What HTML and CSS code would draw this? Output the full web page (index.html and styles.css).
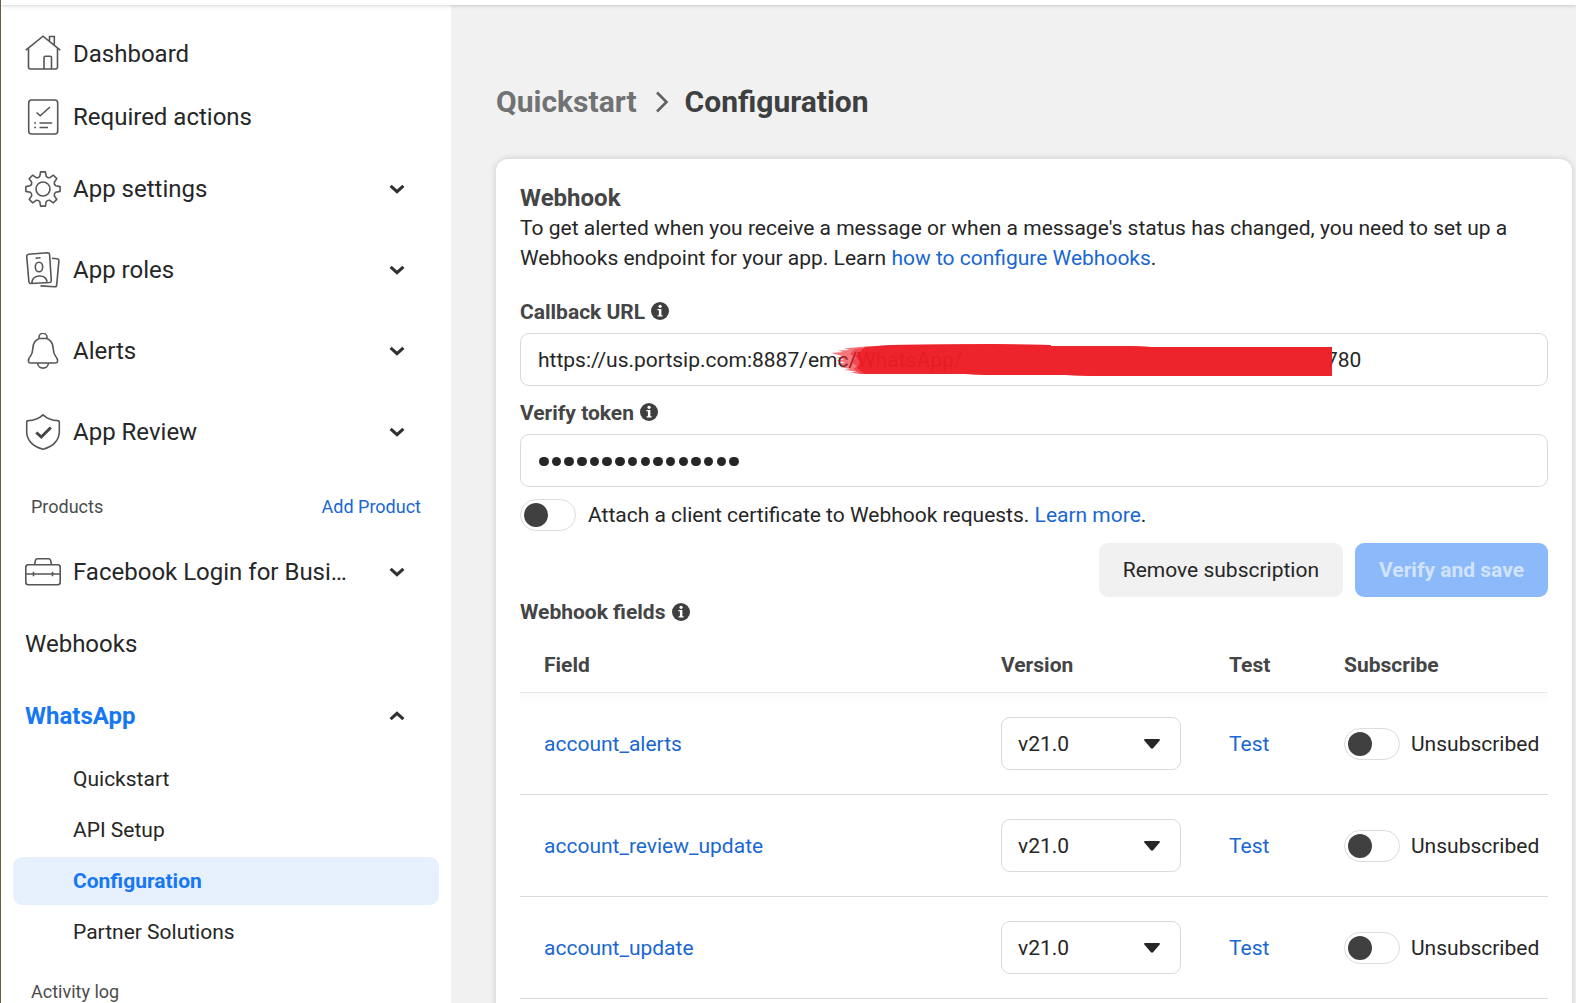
FILE: index.html
```html
<!DOCTYPE html>
<html lang="en">
<head>
<meta charset="utf-8">
<title>Configuration</title>
<link rel="stylesheet" href="styles.css">
</head>
<body>
<svg class="defs" width="0" height="0">
  <symbol id="down" viewBox="0 0 16 10"><path d="M1.6 1.8 8 7.6l6.4-5.8" fill="none" stroke="#303133" stroke-width="3.1"/></symbol>
  <symbol id="info" viewBox="0 0 18 18"><circle cx="9" cy="9" r="9" fill="#3f3f40"/><circle cx="9.1" cy="4.3" r="1.6" fill="#fff"/><path d="M6.4 7h4v6.2h1.2v1.3H6.6v-1.3h1.3V8.3H6.4z" fill="#fff"/></symbol>
  <symbol id="caret" viewBox="0 0 16 10"><path d="M1.200 0h13.600c1 0 1.400 1 .7 1.700L9.300 9c-.8.9-1.800.9-2.600 0L.5 1.700C-.2 1 .2 0 1.200 0z" fill="#262626"/></symbol>
</svg>
<div class="topbar"></div>
<div class="page">
<nav class="sidebar">
  <a class="item dashboard"><svg class="icon" viewBox="0 0 36 36"><path d="M.8 15.200 18 1.200l17.200 14M3.500 13v19a2 2 0 0 0 2 2h25a2 2 0 0 0 2-2V13M24.500 6.300V1.500h4.800v8.700M19 33.500V22.700a1.500 1.500 0 0 1 1.500-1.500h4.500a1.500 1.500 0 0 1 1.500 1.500v10.800"/></svg><span>Dashboard</span></a>
  <a class="item required"><svg class="icon" viewBox="0 0 36 36"><rect x="3.700" y="1" width="29" height="34" rx="3"/><path d="M11.500 13.500l3.700 3.300L25 8M14.500 24h12.700M14.500 28.500h8.500M9.200 24h1.800M9.200 28.500h1.800"/></svg><span>Required actions</span></a>
  <a class="item group"><svg class="icon" viewBox="0 0 36 36"><circle cx="18" cy="18" r="7"/><path stroke-linejoin="round" d="M15.600.9H20.400L21.200 5.200Q22.500 7.100 24.800 6.700L28.400 4.200 31.800 7.600 29.300 11.200Q28.900 13.500 30.800 14.800L35.100 15.600V20.400L30.800 21.200Q28.900 22.500 29.300 24.800L31.800 28.400 28.400 31.800 24.800 29.300Q22.500 28.900 21.200 30.800L20.400 35.100H15.600L14.800 30.800Q13.500 28.900 11.200 29.300L7.600 31.800 4.200 28.400 6.700 24.800Q7.100 22.500 5.200 21.200L.9 20.400V15.600L5.200 14.800Q7.100 13.500 6.700 11.200L4.200 7.600 7.600 4.200 11.200 6.700Q13.500 7.100 14.800 5.200Z"/></svg><span>App settings</span><svg class="chev"><use href="#down"/></svg></a>
  <a class="item group wide"><svg class="icon" viewBox="0 0 36 36"><path d="M3.600 2.200 22.500.8q1.900 0 2.100 1.700l1.700 26q0 1.700-1.700 2L5.900 31.500q-1.700 0-2-1.700L1.700 4.300q0-1.700 1.900-2.100zM6.800 31q.5-6.500 7-7 7-.6 8.300 5.800M10.500 6.200l5-.4"/><ellipse cx="14" cy="15" rx="3.700" ry="4.800"/><path d="M27 6.300l5 .5q2.100.2 1.900 2.100l-2.200 24q-.2 2-2.200 1.900l-14-.9"/></svg><span>App roles</span><svg class="chev"><use href="#down"/></svg></a>
  <a class="item group wide"><svg class="icon" viewBox="0 0 36 36"><path d="M14 5.500V4.300a4 4 0 0 1 8 0v1.200zM14 5.500C9.500 7.500 8 11.500 7.800 15.500 7.600 22 5.500 22.500 4 25.500c-1 1.800-.9 4.500 1.400 4.500h25.200c2.300 0 2.400-2.700 1.400-4.500-1.500-3-3.600-3.500-3.800-10C28 11.500 26.500 7.500 22 5.500M12.500 30c.5 6.800 10.500 6.800 11 0"/></svg><span>Alerts</span><svg class="chev"><use href="#down"/></svg></a>
  <a class="item group wide"><svg class="icon" viewBox="0 0 36 36"><path d="M18 .8c4 3.700 9 5.600 14.800 5.800 1.200 0 1.500.5 1.500 1.500v9.700C34.300 27 27 33 18 35.200 9 33 1.700 27 1.700 17.800V8.100c0-1 .3-1.500 1.500-1.500C9 6.400 14 4.500 18 .8z"/><path class="bold" d="M11.300 18.500l5 4.500 9.500-9.500"/></svg><span>App Review</span><svg class="chev"><use href="#down"/></svg></a>
  <div class="section"><span>Products</span><a class="link">Add Product</a></div>
  <a class="item product"><svg class="icon" viewBox="0 0 36 36"><rect x=".8" y="10.700" width="34.400" height="20" rx="2.500"/><path d="M9.500 10.500l1-4.300q.3-1.400 2-1.400h11q1.700 0 2 1.400l1 4.300M1 20h34M8.500 17.800v4.500M27.500 17.800v4.500"/></svg><span>Facebook Login for Busi…</span><svg class="chev"><use href="#down"/></svg></a>
  <a class="item group">Webhooks</a>
  <a class="item group active"><span>WhatsApp</span><svg class="chev up"><use href="#down"/></svg></a>
  <div class="sub">
    <a>Quickstart</a>
    <a>API Setup</a>
    <a class="selected">Configuration</a>
    <a>Partner Solutions</a>
  </div>
  <div class="activity">Activity log</div>
</nav>
<main class="main">
  <h1 class="crumbs"><span class="parent">Quickstart</span><svg width="14" height="22" viewBox="0 0 14 22"><path d="M2 1.500l9.500 9.500L2 20.500" fill="none" stroke="#606162" stroke-width="2.600"/></svg><span>Configuration</span></h1>
  <section class="card">
    <h2 class="title">Webhook</h2>
    <p class="text">To get alerted when you receive a message or when a message's status has changed, you need to set up a Webhooks endpoint for your app. Learn <a class="link">how to configure Webhooks</a>.</p>
    <div class="label callback">Callback URL<svg class="info"><use href="#info"/></svg></div>
    <div class="input url"><span class="address">https://us.portsip.com:8887/emc/WhatsApp/</span><span>780</span>
      <svg class="brush" width="502" height="34" viewBox="0 0 502 34"><path d="M0 9l12-1-5-1.500 12-.5-6-1.500L28 3 60 1l100-1 60 1v1h80l20 1h181v29H260l-25-1h-80l-20-1H28l-8-1.500 5-1-12-1.500 6-1-10-2 8-1-12-2 9-1.500-9-2 8-1-8-2 8-1z" fill="#ed1c24" fill-opacity=".6"/><path d="M24 5L60 1l100-1 60 1v1h80l20 1h181v29H260l-25-1h-80l-20-1H30l-8-5 4-3-6-4 5-4-6-4z" fill="#ed1c24" fill-opacity=".5"/><path d="M34 3L60 1l100-1 60 1v1h80l20 1h181v29H260l-25-1h-80l-20-1H34l-8-6 3-6-4-6 5-5z" fill="#ed1c24" fill-opacity=".82"/></svg>
    </div>
    <div class="label">Verify token<svg class="info"><use href="#info"/></svg></div>
    <div class="input"><span class="dots"><i></i><i></i><i></i><i></i><i></i><i></i><i></i><i></i><i></i><i></i><i></i><i></i><i></i><i></i><i></i><i></i></span></div>
    <div class="attach"><span class="toggle"></span><span>Attach a client certificate to Webhook requests. <a class="link">Learn more</a>.</span></div>
    <div class="buttons"><button class="btn">Remove subscription</button><button class="btn primary">Verify and save</button></div>
    <div class="label fields">Webhook fields<svg class="info"><use href="#info"/></svg></div>
    <div class="row head"><span>Field</span><span>Version</span><span>Test</span><span>Subscribe</span></div>
    <div class="row first"><a class="link">account_alerts</a><div class="select">v21.0<svg class="caret"><use href="#caret"/></svg></div><a class="link">Test</a><div class="subscribe"><span class="toggle"></span>Unsubscribed</div></div>
    <div class="row"><a class="link">account_review_update</a><div class="select">v21.0<svg class="caret"><use href="#caret"/></svg></div><a class="link">Test</a><div class="subscribe"><span class="toggle"></span>Unsubscribed</div></div>
    <div class="row"><a class="link">account_update</a><div class="select">v21.0<svg class="caret"><use href="#caret"/></svg></div><a class="link">Test</a><div class="subscribe"><span class="toggle"></span>Unsubscribed</div></div>
    <div class="row"></div>
  </section>
</main>
</div>
</body>
</html>
```

FILE: styles.css
```css
* { box-sizing: border-box; }
body { margin: 0; height: 1003px; overflow: hidden; display: flex; flex-direction: column; font: 21px/30px Roboto, sans-serif; color: #262626; background: #f1f1f1; border-left: 1px solid #695f3d; }
.defs { display: none; }
.topbar { flex: none; height: 5px; background: #fff; box-shadow: 0 0 4px rgba(0,0,0,.25); z-index: 1; }
.page { flex: 1; min-height: 0; display: flex; overflow: hidden; }
.link { color: #1967d2; text-decoration: none; }

.sidebar { width: 450px; flex: none; background: #fff; padding: 31px 12px 0; }
.item { display: flex; align-items: center; height: 36px; padding: 0 34px 0 12px; font-size: 24px; line-height: 36px; color: #262728; }
.icon { width: 36px; height: 36px; margin-right: 12px; fill: none; stroke: #555657; stroke-width: 1.600; flex: none; }
.icon .bold { stroke-width: 3; stroke: #454647; }
.dashboard .icon { margin-bottom: 2px; }
.required { margin-top: 27px; }
.group { margin-top: 36px; }
.wide { margin-top: 45px; }
.chev { width: 16px; height: 10px; margin-left: auto; }
.up { transform: scaleY(-1); }
.active { color: #1877f2; font-weight: 700; }
.section { display: flex; justify-content: space-between; margin-top: 42px; padding: 0 18px; font-size: 18px; color: #4b4c4d; }
.product { margin-top: 32px; }
.sub { display: flex; flex-direction: column; gap: 3px; margin-top: 21px; }
.sub a { height: 48px; line-height: 48px; padding-left: 60px; border-radius: 9px; }
.sub .selected { background: #e7f1fd; color: #1877f2; font-weight: 700; }
.activity { margin: 21px 0 0 18px; font-size: 18px; color: #4b4c4d; }

.main { flex: 1; padding: 77px 4px 0 45px; }
.crumbs { display: flex; align-items: center; gap: 17px; height: 40px; margin: 0 0 37px; font-size: 30px; line-height: 40px; font-weight: 700; color: #3e3f40; }
.crumbs svg { margin-left: 1px; margin-right: -1px; }
.crumbs .parent { color: #717273; }
.card { height: 870px; padding: 24px; background: #fff; border-radius: 12px; box-shadow: 0 0 6px rgba(0,0,0,.17); }
.title { margin: 0; font-size: 24px; line-height: 30px; color: #444546; }
.text { margin: 0; }
.label { display: flex; align-items: center; height: 30px; margin-top: 12px; font-weight: 700; color: #444546; }
.callback { margin-top: 24px; }
.info { width: 18px; height: 18px; margin: 0 0 2px 6px; }
.input { display: flex; align-items: center; position: relative; height: 53px; margin-top: 6px; padding: 0 17px; border: 1px solid #d9dadb; border-radius: 9px; }
.brush { position: absolute; left: 310px; top: 10px; }
.address { flex: 0 0 788px; }
.dots { display: flex; gap: 3.200px; padding: 2px 0 0 1px; }
.dots i { width: 9.500px; height: 9.500px; border-radius: 50%; background: #262626; }
.attach { display: flex; align-items: center; gap: 12px; height: 32px; margin-top: 12px; }
.toggle { display: flex; align-items: center; width: 56px; height: 32px; border: 1px solid #dcdddd; border-radius: 16px; padding-left: 3px; flex: none; }
.toggle::before { content: ""; width: 24px; height: 24px; border-radius: 50%; background: #404041; }
.buttons { display: flex; justify-content: flex-end; gap: 12px; margin-top: 12px; }
.btn { height: 54px; padding: 0 24px; border: 0; border-radius: 9px; font: 21px/30px Roboto, sans-serif; color: #262626; background: #f1f1f1; }
.primary { background: #8bb9f9; color: #d1e3fd; font-weight: 700; }
.fields { margin-top: 0; }
.fields .info { margin: 0 0 0 7px; }
.row { display: grid; grid-template-columns: 457px 228px 115px 1fr; align-items: center; height: 102px; padding-left: 24px; border-top: 1px solid #d9dadb; }
.head { height: 65px; padding-top: 11px; border-top: 0; font-weight: 700; color: #444546; }
.first { border-top-color: #e9eaea; background: linear-gradient(#fafafa, #fff 12px); }
.select { display: flex; align-items: center; justify-content: space-between; width: 180px; height: 53px; padding: 0 20px 0 16px; border: 1px solid #d9dadb; border-radius: 9px; }
.caret { width: 16px; height: 10px; }
.subscribe { display: flex; align-items: center; gap: 11px; }
```
